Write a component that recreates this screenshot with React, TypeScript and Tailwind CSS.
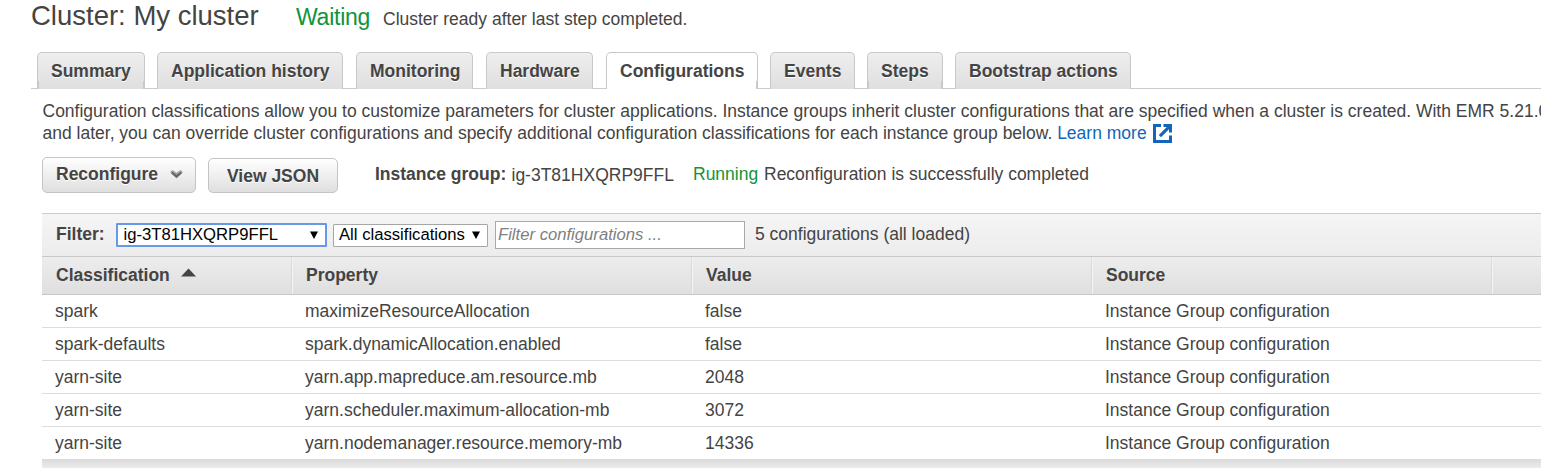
const NUB_LEFT =
  "before:absolute before:bottom-0 before:left-0 before:h-2 before:w-px before:bg-[#cacaca] before:content-['']";
const NUB_RIGHT =
  "after:absolute after:bottom-0 after:right-0 after:h-2 after:w-px after:bg-[#cacaca] after:content-['']";

const TABS = [
  { label: 'Summary', box: 'w-[108px] mr-3', nubs: `${NUB_LEFT} ${NUB_RIGHT}` },
  { label: 'Application history', box: 'w-[186px] mr-[13px]' },
  { label: 'Monitoring', box: 'w-[117px] mr-[13px]' },
  { label: 'Hardware', box: 'w-[107px] mr-[13px]' },
  { label: 'Configurations', box: 'w-[152px] mr-3', active: true, nubs: NUB_RIGHT },
  { label: 'Events', box: 'w-[85px] mr-3' },
  { label: 'Steps', box: 'w-[76px] mr-3', nubs: `${NUB_LEFT} ${NUB_RIGHT}` },
  { label: 'Bootstrap actions', box: 'w-[176px]' },
];

const ROWS = [
  ['spark', 'maximizeResourceAllocation', 'false'],
  ['spark-defaults', 'spark.dynamicAllocation.enabled', 'false'],
  ['yarn-site', 'yarn.app.mapreduce.am.resource.mb', '2048'],
  ['yarn-site', 'yarn.scheduler.maximum-allocation-mb', '3072'],
  ['yarn-site', 'yarn.nodemanager.resource.memory-mb', '14336'],
];

const COLUMNS = ['Classification', 'Property', 'Value', 'Source', ''];

function Header() {
  return (
    <header className="flex h-[52px] items-start pl-[31px] leading-8">
      <h1 className="w-[265px] text-[27.5px]">Cluster: My cluster</h1>
      <span className="mt-px w-[87px] text-[23px] tracking-[-0.25px] text-[#11943b]">Waiting</span>
      <span className="mt-[3px]">Cluster ready after last step completed.</span>
    </header>
  );
}

function Tabs() {
  return (
    <nav className="ml-[31px] flex h-[37px] border-b border-[#ccc] pl-1.5">
      {TABS.map((tab) => (
        <button
          key={tab.label}
          className={`${tab.box} ${tab.nubs ?? ''} relative h-[37px] shrink-0 rounded-t-[5px] border border-b-0 border-[#c8c8c8] pl-[13px] text-left font-bold leading-9 ${
            tab.active
              ? 'bg-white'
              : 'bg-linear-to-b from-[#eeeeee] to-[#dfdfdf] [text-shadow:0_1px_0_#fff]'
          }`}
        >
          {tab.label}
        </button>
      ))}
    </nav>
  );
}

function Intro() {
  return (
    <p className="ml-[42.5px] mt-[11px] leading-[22px]">
      Configuration classifications allow you to customize parameters for cluster applications. Instance groups
      inherit cluster configurations that are specified when a cluster is created. With EMR 5.21.0
      <br />
      and later, you can override cluster configurations and specify additional configuration classifications for
      each instance group below. <a className="text-[#1166bb]">Learn more</a>
      <svg className="ml-[6px] inline-block align-[-4px]" width="19" height="19" viewBox="0 0 19 19">
        <path d="M8 1.5H1.5v16h16V11.5" fill="none" stroke="#1166bb" strokeWidth="3" />
        <path d="M10.5 0H19V8.5H16V5.2L8 13.2 5.8 11 13.8 3H10.5Z" fill="#1166bb" />
      </svg>
    </p>
  );
}

function Actions() {
  return (
    <div className="ml-[42px] mt-[13px] flex h-9 items-start">
      <button className="flex h-9 w-[154px] items-center justify-between rounded-[5px] border border-[#c4c4c4] bg-linear-to-b from-white to-[#dfdfdf] pb-0.5 pl-[13px] pr-3 font-bold [text-shadow:0_1px_0_#fff]">
        Reconfigure
        <svg width="13" height="9" viewBox="0 0 13 9">
          <path d="M0 2 2.5 0 6.5 2.8 10.5 0 13 2 6.5 8.5Z" fill="#a4a4a4" />
          <path d="m1.8 2.6 4.7 3.8 4.7-3.8" fill="none" stroke="#666" strokeWidth="2" />
        </svg>
      </button>
      <button className="ml-3 mt-px h-[35px] w-[130px] rounded-[5px] border border-[#c4c4c4] bg-linear-to-b from-white to-[#dfdfdf] pt-px font-bold leading-[33px] [text-shadow:0_1px_0_#fff]">
        View JSON
      </button>
      <b className="ml-[37px] w-[136.5px] leading-[34px]">Instance group:</b>
      <span className="w-[181.5px] leading-9">ig-3T81HXQRP9FFL</span>
      <span className="w-[71px] leading-[34px] text-[#11943b]">Running</span>
      <span className="leading-[34px]">Reconfiguration is successfully completed</span>
    </div>
  );
}

function Arrow() {
  return (
    <svg width="8" height="8" viewBox="0 0 8 8">
      <path d="M0 .5h8L4 8Z" fill="#000" />
    </svg>
  );
}

function FilterBar() {
  return (
    <div className="flex h-[43px] items-center border-t border-[#ccc] bg-linear-to-b from-[#f5f5f5] to-[#ececec] pl-3.5">
      <b className="w-[60px] pb-0.5">Filter:</b>
      <button className="flex h-6 w-[211px] items-center justify-between rounded-[1px] border-2 border-[#6699e8] bg-white pl-[5.5px] pr-[7px] text-[16.67px] text-black">
        <span className="pb-0.5">ig-3T81HXQRP9FFL</span>
        <Arrow />
      </button>
      <button className="ml-1.5 flex h-[23px] w-[155px] items-center justify-between rounded-[1px] border border-[#a6a6a6] bg-white pl-[5px] pr-[7px] text-[16.67px] text-black">
        <span className="pb-0.5">All classifications</span>
        <Arrow />
      </button>
      <input
        className="ml-[7px] h-7 w-[250px] border border-[#a9a9a9] bg-white pl-0.5 text-[16.67px] italic placeholder:text-[#808080]"
        placeholder="Filter configurations ..."
      />
      <span className="ml-2.5 pb-0.5">5 configurations (all loaded)</span>
    </div>
  );
}

function Table() {
  return (
    <div>
      <div className="flex h-[39px] border-y border-[#c8c8c8] bg-linear-to-b from-[#ededed] to-[#dfdfdf] font-bold leading-[37px]">
        {COLUMNS.map((name, i) => (
          <div
            key={i}
            className={`flex shrink-0 items-center ${
              i === 0 ? 'w-[249px] pl-3.5' : 'w-[400px] border-l border-[#dadada]'
            }`}
          >
            {i === 0 ? (
              <>
                <span>{name}</span>
                <svg className="mb-1.5 ml-[11px]" width="15" height="9" viewBox="0 0 15 9">
                  <path d="M0 8.5 7.5.5l7.5 8Z" fill="#444" />
                </svg>
              </>
            ) : (
              <span className="h-full border-l border-[#f4f4f4] pl-[13px]">{name}</span>
            )}
          </div>
        ))}
      </div>
      {ROWS.map(([classification, property, value]) => (
        <div key={property} className="flex h-[33px] border-b border-[#ddd] bg-white leading-8">
          <span className="w-[250px] shrink-0 pl-[13px]">{classification}</span>
          <span className="w-[400px] shrink-0 pl-[13px]">{property}</span>
          <span className="w-[400px] shrink-0 pl-[13px]">{value}</span>
          <span className="w-[400px] shrink-0 pl-[13px]">Instance Group configuration</span>
        </div>
      ))}
    </div>
  );
}

export default function App() {
  return (
    <div className="h-[468px] w-[1541px] overflow-hidden whitespace-nowrap bg-white font-['Liberation_Sans',Arial,sans-serif] text-[17.5px] text-[#444]">
      <Header />
      <Tabs />
      <Intro />
      <Actions />
      <section className="ml-[42px] mt-5">
        <FilterBar />
        <Table />
        <footer className="h-[9px] bg-linear-to-b from-[#dcdcdc] to-[#eeeeee]" />
      </section>
    </div>
  );
}
